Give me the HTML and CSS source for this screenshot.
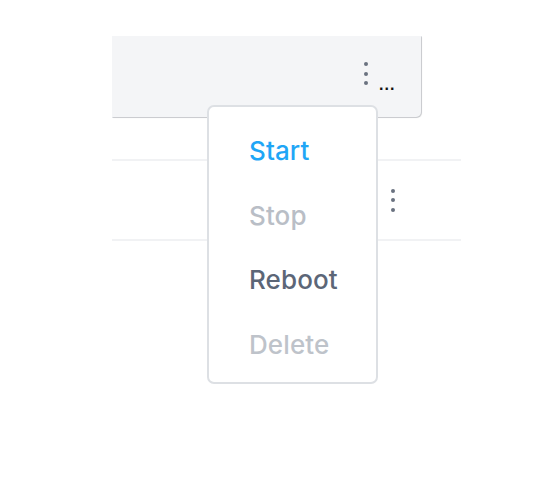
FILE: index.html
```html
<!DOCTYPE html>
<html>
<head>
<meta charset="utf-8">
<link rel="stylesheet" href="styles.css">
</head>
<body>
<div class="stage">
  <div class="clip">
    <div class="card">
      <span class="kebab"><i></i><i></i><i></i></span>
      <span class="ellipsis">...</span>
    </div>
    <div class="list">
      <div class="row">
        <span class="kebab row-kebab"><i></i><i></i><i></i></span>
      </div>
    </div>
  </div>
  <ul class="menu">
    <li class="item start">Start</li>
    <li class="item stop">Stop</li>
    <li class="item reboot">Reboot</li>
    <li class="item delete">Delete</li>
  </ul>
</div>
</body>
</html>
```
FILE: styles.css
```css
html, body {
  margin: 0;
  padding: 0;
  background: #ffffff;
}
body {
  font-family: "Inter", "Open Sans", sans-serif;
  width: 550px;
  height: 498px;
  overflow: hidden;
}
.stage {
  position: relative;
  width: 550px;
  height: 498px;
}
.clip {
  position: relative;
  top: 36px;
  left: 112px;
  width: 349px;
  padding: 0 0 4px 0;
  overflow: hidden;
}
.card {
  width: 309px;
  height: 81px;
  box-sizing: border-box;
  background: #f4f5f7;
  border-bottom-right-radius: 5px;
  box-shadow: 1px 1px 1px rgba(0,0,0,0.12), 0 0 0 1px #e3e5e9;
  display: flex;
  align-items: flex-start;
  padding-left: 252px;
  padding-top: 26px;
}
.kebab {
  display: flex;
  flex-direction: column;
  gap: 5.5px;
}
.kebab i {
  display: block;
  width: 4px;
  height: 4px;
  border-radius: 50%;
  background: #6a7280;
}
.ellipsis {
  font-family: "Liberation Sans", sans-serif;
  font-size: 16px;
  font-weight: bold;
  color: #111;
  line-height: 16px;
  margin-left: 11px;
  margin-top: 15px;
  letter-spacing: 1px;
}
.list {
  margin-top: 42px;
  border-top: 2px solid #f1f2f4;
  border-bottom: 2px solid #f1f2f4;
}
.row {
  height: 78px;
  display: flex;
  align-items: center;
  justify-content: flex-end;
  padding-right: 66px;
}
.menu {
  position: absolute;
  left: 207px;
  top: 105px;
  width: 171px;
  height: 279px;
  box-sizing: border-box;
  margin: 0;
  padding: 12px 0 0 0;
  list-style: none;
  background: #ffffff;
  border: 2px solid #dde0e4;
  border-radius: 7px;
}
.item {
  height: 64.5px;
  line-height: 64.5px;
  padding-left: 40px;
  font-size: 26px;
  font-weight: 500;
  letter-spacing: 0.1px;
}
.start { color: #1fa6f6; }
.stop { color: #b9bec6; }
.reboot { color: #5c6677; }
.delete { color: #bec3ca; }
```
